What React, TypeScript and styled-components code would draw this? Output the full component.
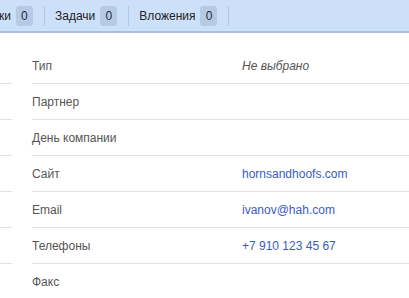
import { createGlobalStyle, styled } from "styled-components";

const GlobalStyle = createGlobalStyle`
  html, body {
    margin: 0;
    padding: 0;
    background: #fff;
    font-family: "Liberation Sans", Arial, sans-serif;
    overflow: hidden;
  }
`;

const tabs = [
  { title: "ки", count: 0 },
  { title: "Задачи", count: 0 },
  { title: "Вложения", count: 0 },
];

const fields = [
  { label: "Тип", value: "Не выбрано", kind: "empty" },
  { label: "Партнер" },
  { label: "День компании" },
  { label: "Сайт", value: "hornsandhoofs.com", kind: "link" },
  { label: "Email", value: "ivanov@hah.com", kind: "link" },
  { label: "Телефоны", value: "+7 910 123 45 67", kind: "link" },
  { label: "Факс" },
];

export default function App() {
  return (
    <>
      <GlobalStyle />
      <Page>
        <TabBar>
          {tabs.map((tab) => (
            <Tab key={tab.title}>
              <TabTitle>{tab.title}</TabTitle>
              <Badge>{tab.count}</Badge>
            </Tab>
          ))}
        </TabBar>
        <FieldList>
          {fields.map((field) => (
            <FieldRow key={field.label}>
              <Gutter />
              <FieldBody>
                <Label>{field.label}</Label>
                {field.value && <Value $kind={field.kind}>{field.value}</Value>}
              </FieldBody>
            </FieldRow>
          ))}
        </FieldList>
      </Page>
    </>
  );
}

const Page = styled.div`
  width: 409px;
  height: 298px;
  overflow: hidden;
`;

const TabBar = styled.div`
  display: flex;
  align-items: center;
  height: 31px;
  background: #cde0f9;
  border-bottom: 2px solid #a9c0da;
`;

const Tab = styled.div`
  display: flex;
  align-items: center;
  gap: 5px;
  height: 20px;
  padding: 0 11px 0 10px;
  border-right: 1px solid #b3c8e0;
  font-size: 12px;
  color: #222;

  &:first-child {
    padding-left: 0;
    margin-left: -1px;
  }
`;

const TabTitle = styled.span`
  white-space: nowrap;
`;

const Badge = styled.span`
  display: flex;
  align-items: center;
  justify-content: center;
  width: 17px;
  height: 20px;
  border-radius: 3px;
  background: #b6cbe3;
  color: #1f2a44;
  font-size: 12px;
`;

const FieldList = styled.div`
  padding-top: 15px;
`;

const FieldRow = styled.div`
  display: grid;
  grid-template-columns: 12px 1fr;
  column-gap: 20px;
`;

const Gutter = styled.div`
  border-bottom: 1px solid #e3e3e3;
`;

const FieldBody = styled.div`
  display: grid;
  grid-template-columns: 210px 1fr;
  align-items: center;
  height: 35px;
  border-bottom: 1px solid #e3e3e3;
  font-size: 12px;
`;

const Label = styled.span`
  color: #555;
`;

const Value = styled.span<{ $kind?: string }>`
  color: ${(p) => (p.$kind === "link" ? "#3a5bc4" : "#555")};
  font-style: ${(p) => (p.$kind === "empty" ? "italic" : "normal")};
`;
